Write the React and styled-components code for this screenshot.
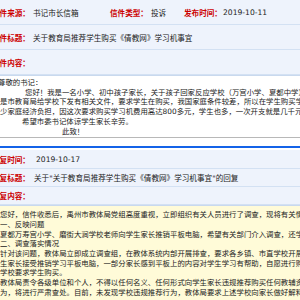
import React from 'react';
import styled, { createGlobalStyle } from 'styled-components';

const GlobalStyle = createGlobalStyle`
  html, body {
    margin: 0;
    padding: 0;
    overflow: hidden;
    background: #ffffff;
  }
  body {
    font-family: "DejaVu Sans", "Noto Sans CJK SC", sans-serif;
    color: #222;
  }
`;

const Page = styled.div`
  width: 640px;
  margin-left: -8px;
`;

const InfoTable = styled.div`
  border-bottom: 1px solid #c9d9ee;
`;

const Row = styled.div`
  display: flex;
  align-items: center;
  height: ${(p) => p.$h}px;
  background: #eef3fc;
  border-bottom: 1px solid #d3e1f3;
  font-size: 7.6px;
  white-space: nowrap;
`;

const Label = styled.span`
  color: #cc0000;
  font-weight: bold;
  width: ${(p) => (p.$w ? `${p.$w}px` : 'auto')};
  flex-shrink: 0;
`;

const Value = styled.span`
  width: ${(p) => (p.$w ? `${p.$w}px` : 'auto')};
  flex-shrink: 0;
  padding-left: 2px;
`;

const Letter = styled.div`
  background: ${(p) => p.$bg};
  font-size: 7.4px;
  line-height: 9.7px;
  padding: ${(p) => p.$pad};
  white-space: nowrap;
  overflow: hidden;
`;

const Line = styled.div`
  padding-left: ${(p) => p.$indent || 0}px;
`;

const Gap = styled.div`
  height: 8px;
  background: #ffffff;
  border-top: 1px solid #b8b8b8;
`;

const BlueBar = styled.div`
  height: 2px;
  background: #1463e8;
  margin-bottom: 2px;
`;

const Footer = styled.div`
  height: 20px;
  background: #eef3fc;
  border-top: 1px solid #d3e1f3;
`;

const letterLines = [
  { t: '尊敬的书记：', i: 6 },
  { t: '您好！我是一名小学、初中孩子家长，关于孩子回家反应学校（万宫小学、夏都中学）说', i: 33 },
  { t: '是市教育局给学校下发有相关文件，要求学生在购买，我国家庭条件较差，所以在学生购买学习机', i: 8 },
  { t: '少家庭经济负担，因这次要求购买学习机费用高达800多元，学生也多，一次开支就是几千元', i: 8 },
  { t: '希望市委书记体谅学生家长辛劳。', i: 30 },
  { t: '此致！', i: 70 },
];

const replyLines = [
  '您好，信件收悉后，禹州市教体局党组高度重视，立即组织有关人员进行了调查，现将有关情况回复如下：',
  '一、反映问题',
  '夏都万寿宫小学、磨街大涧学校老师向学生家长推销平板电脑，希望有关部门介入调查，还学生',
  '二、调查落实情况',
  '针对该问题，教体局立即成立调查组，在教体系统内部开展排查，要求各乡镇、市直学校开展自查',
  '生家长接受推销学习平板电脑，一部分家长感到平板上的内容对学生学习有帮助，自愿进行购买',
  '学校要求学生购买。',
  '教体局责令各级单位和个人，不得以任何名义、任何形式向学生家长违规推荐购买任何教辅资料',
  '为，将进行严肃查处。目前，未发现学校违规推荐行为，教体局要求上述学校向家长做好解释工作',
];

export default function App() {
  return (
    <Page>
      <GlobalStyle />
      <InfoTable>
        <Row $h={24}>
          <Label $w={39}>信件来源：</Label>
          <Value $w={77}>书记市长信箱</Value>
          <Label $w={39}>信件类型：</Label>
          <Value $w={33}>投诉</Value>
          <Label $w={37}>发布时间：</Label>
          <Value>2019-10-11</Value>
        </Row>
        <Row $h={24}>
          <Label $w={39}>信件标题：</Label>
          <Value>关于教育局推荐学生购买《倩教网》学习机事宜</Value>
        </Row>
        <Row $h={24}>
          <Label $w={39}>信件内容：</Label>
        </Row>
      </InfoTable>
      <Letter $bg="#ffffff" $pad="2px 0 1px 0">
        {letterLines.map((l, n) => (
          <Line key={n} $indent={l.i}>{l.t}</Line>
        ))}
      </Letter>
      <Gap />
      <BlueBar />
      <InfoTable>
        <Row $h={18}>
          <Label $w={42}>回复时间：</Label>
          <Value>2019-10-17</Value>
        </Row>
        <Row $h={17}>
          <Label $w={40}>回复标题：</Label>
          <Value>关于"关于教育局推荐学生购买《倩教网》学习机事宜"的回复</Value>
        </Row>
        <Row $h={17}>
          <Label $w={40}>回复内容：</Label>
        </Row>
      </InfoTable>
      <Letter $bg="#fffbd8" $pad="4px 0 2px 0">
        {replyLines.map((t, n) => (
          <Line key={n} $indent={8}>{t}</Line>
        ))}
      </Letter>
      <Footer />
    </Page>
  );
}
